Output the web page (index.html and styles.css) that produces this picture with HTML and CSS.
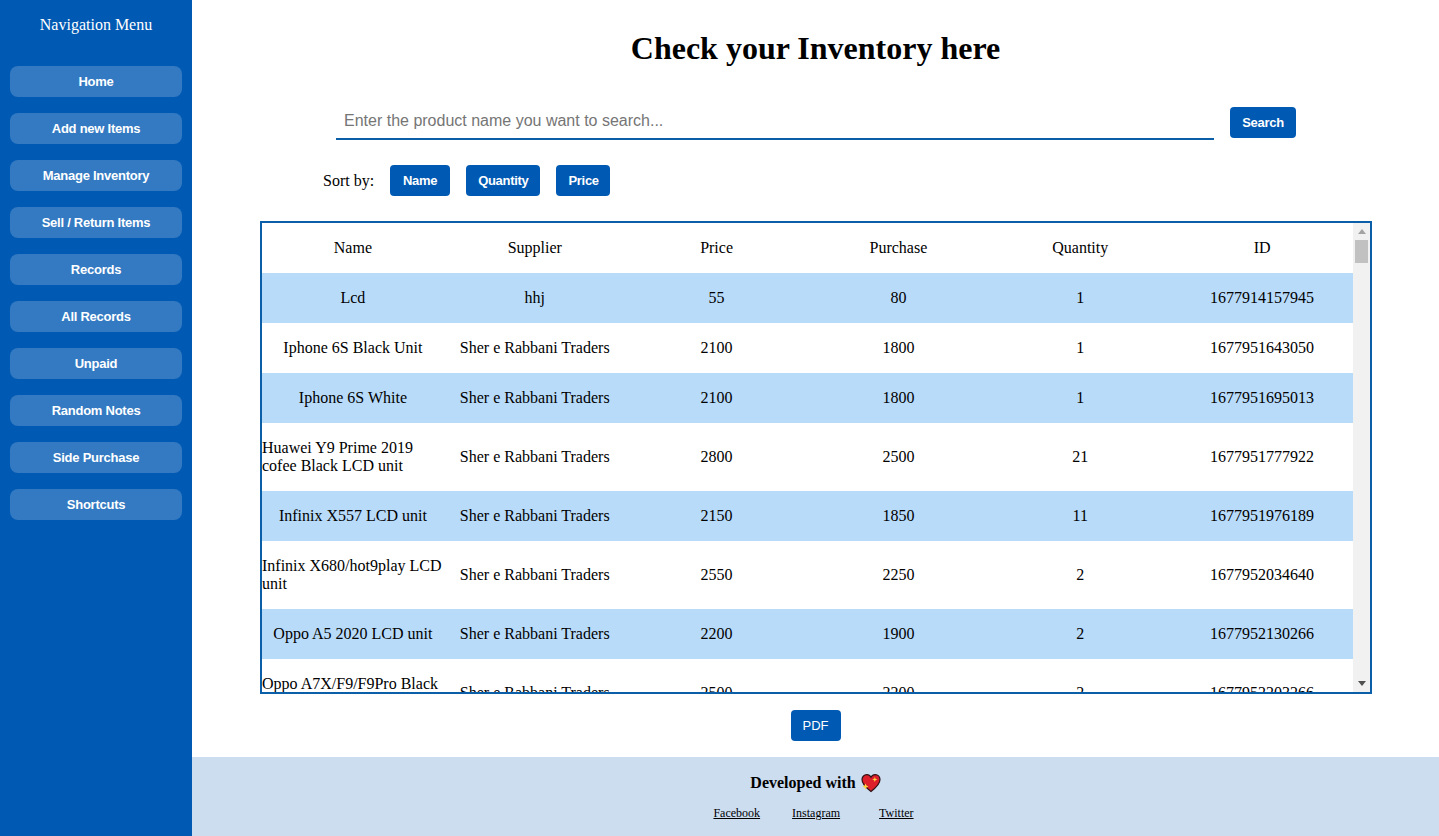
FILE: index.html
```html
<!DOCTYPE html>
<html>
<head>
  <title>Check your Inventory here</title>
  <link rel="stylesheet" href="styles.css">
</head>
<body>
  <nav class="sidebar">
    <h3 class="sidebar-title">Navigation Menu</h3>
    <a class="nav-btn">Home</a>
    <a class="nav-btn">Add new Items</a>
    <a class="nav-btn">Manage Inventory</a>
    <a class="nav-btn">Sell / Return Items</a>
    <a class="nav-btn">Records</a>
    <a class="nav-btn">All Records</a>
    <a class="nav-btn">Unpaid</a>
    <a class="nav-btn">Random Notes</a>
    <a class="nav-btn">Side Purchase</a>
    <a class="nav-btn">Shortcuts</a>
  </nav>

  <div class="page">
    <main class="content">
      <h1 class="title">Check your Inventory here</h1>

      <div class="search-row">
        <input class="search-input" type="text" placeholder="Enter the product name you want to search...">
        <button class="btn btn-search">Search</button>
      </div>

      <div class="sort-row">
        <span class="sort-label">Sort by:</span>
        <button class="btn btn-name">Name</button>
        <button class="btn">Quantity</button>
        <button class="btn btn-price">Price</button>
      </div>

      <div class="inventory">
        <div class="inv-list">
          <div class="inv-row">
            <div>Name</div><div>Supplier</div><div>Price</div><div>Purchase</div><div>Quantity</div><div>ID</div>
          </div>
          <div class="inv-row">
            <div>Lcd</div><div>hhj</div><div>55</div><div>80</div><div>1</div><div>1677914157945</div>
          </div>
          <div class="inv-row">
            <div>Iphone 6S Black Unit</div><div>Sher e Rabbani Traders</div><div>2100</div><div>1800</div><div>1</div><div>1677951643050</div>
          </div>
          <div class="inv-row">
            <div>Iphone 6S White</div><div>Sher e Rabbani Traders</div><div>2100</div><div>1800</div><div>1</div><div>1677951695013</div>
          </div>
          <div class="inv-row">
            <div>Huawei Y9 Prime 2019 cofee Black LCD unit</div><div>Sher e Rabbani Traders</div><div>2800</div><div>2500</div><div>21</div><div>1677951777922</div>
          </div>
          <div class="inv-row">
            <div>Infinix X557 LCD unit</div><div>Sher e Rabbani Traders</div><div>2150</div><div>1850</div><div>11</div><div>1677951976189</div>
          </div>
          <div class="inv-row">
            <div>Infinix X680/hot9play LCD unit</div><div>Sher e Rabbani Traders</div><div>2550</div><div>2250</div><div>2</div><div>1677952034640</div>
          </div>
          <div class="inv-row">
            <div>Oppo A5 2020 LCD unit</div><div>Sher e Rabbani Traders</div><div>2200</div><div>1900</div><div>2</div><div>1677952130266</div>
          </div>
          <div class="inv-row">
            <div>Oppo A7X/F9/F9Pro Black LCD unit</div><div>Sher e Rabbani Traders</div><div>2500</div><div>2200</div><div>2</div><div>1677952203266</div>
          </div>
        </div>
        <div class="scroll-track">
          <span class="scroll-arrow"><i class="arrow-up"></i></span>
          <span class="scroll-thumb"></span>
          <span class="scroll-arrow scroll-arrow-end"><i class="arrow-down"></i></span>
        </div>
      </div>

      <button class="btn btn-pdf">PDF</button>
    </main>

    <footer class="footer">
      <div class="footer-line">
        <span>Developed with</span>
        <svg class="heart" viewBox="0 0 20 20" width="20" height="20">
          <path d="M10 18.5 C6 15.5 1 11.5 1 6.6 C1 3.6 3.4 1.6 5.8 1.6 C7.6 1.6 9.2 2.6 10 4.2 C10.8 2.6 12.4 1.6 14.2 1.6 C16.7 1.6 19 3.6 19 6.6 C19 11.5 14 15.5 10 18.5 Z" fill="#dc1f2a" stroke="#2e1417" stroke-width="1.2"/>
          <path d="M13.8 4 L14.5 5.8 L16.3 6.5 L14.5 7.2 L13.8 9 L13.1 7.2 L11.3 6.5 L13.1 5.8 Z" fill="#ffd23f"/>
          <path d="M4.5 10.5 L5.4 12.6 L7.5 13.5 L5.4 14.4 L4.5 16.5 L3.6 14.4 L1.5 13.5 L3.6 12.6 Z" fill="#ffd23f"/>
        </svg>
      </div>
      <div class="footer-links">
        <a href="#">Facebook</a>
        <a href="#">Instagram</a>
        <a href="#">Twitter</a>
      </div>
    </footer>
  </div>
</body>
</html>
```

FILE: styles.css
```css
* {
  box-sizing: border-box;
}
html, body {
  height: 100%;
}
body {
  margin: 0;
  display: flex;
  overflow: hidden;
  font-family: "Liberation Serif", serif;
  color: #000;
  background-color: #fff;
}

/* sidebar */
.sidebar {
  width: 192px;
  flex: none;
  background-color: #0059b3;
  padding: 16px 10px 0;
  display: flex;
  flex-direction: column;
  gap: 16px;
}
.sidebar-title {
  margin: 0 0 16px;
  height: 18px;
  color: #fff;
  font-size: 16px;
  font-weight: normal;
  line-height: 18px;
  text-align: center;
}
.nav-btn {
  height: 31px;
  line-height: 31px;
  background-color: rgba(255, 255, 255, 0.2);
  border-radius: 8px;
  color: #fff;
  font-family: "Liberation Sans", sans-serif;
  font-size: 13px;
  font-weight: bold;
  letter-spacing: -0.25px;
  text-align: center;
}

/* main */
.page {
  flex: 1;
  min-width: 0;
  display: flex;
  flex-direction: column;
}
.content {
  flex: 1;
  display: flex;
  flex-direction: column;
  align-items: center;
  padding-top: 30px;
}
.title {
  margin: 0;
  font-size: 32px;
  line-height: 37px;
  text-align: center;
}
.btn {
  height: 31px;
  padding: 0 12px;
  border: none;
  border-radius: 4px;
  background-color: #0059b3;
  color: #fff;
  font-family: "Liberation Sans", sans-serif;
  font-size: 13px;
  font-weight: bold;
  letter-spacing: -0.3px;
}
.search-row {
  align-self: flex-start;
  display: flex;
  align-items: flex-end;
  gap: 16px;
  margin: 35px 0 0 144px;
}
.search-input {
  width: 878px;
  height: 38px;
  padding: 2px 8px 0;
  border: none;
  border-bottom: 2px solid #0b5ea8;
  outline: none;
  font-family: "Liberation Sans", sans-serif;
  font-size: 16px;
}
.btn-search {
  width: 66px;
  margin-bottom: 2px;
}
.sort-row {
  align-self: flex-start;
  display: flex;
  align-items: center;
  gap: 16px;
  margin: 25px 0 0 131px;
}
.sort-label {
  font-size: 16px;
}
.btn-name {
  width: 60px;
}
.btn-price {
  width: 54px;
}
.inventory {
  align-self: flex-start;
  width: 1112px;
  height: 473px;
  margin: 25px 0 0 68px;
  border: 2px solid #0b5ea8;
  display: flex;
  font-size: 16px;
}
.inv-list {
  flex: 1;
  min-width: 0;
  overflow: hidden;
}
.inv-row {
  display: grid;
  grid-template-columns: repeat(6, 1fr);
  line-height: 18px;
}
.inv-row:nth-child(even) {
  background-color: #b8dbfa;
}
.inv-row > div {
  display: flex;
  align-items: center;
  justify-content: center;
  padding: 16px 0;
  min-width: 0;
}

/* scrollbar, the list sits at the top of a long list */
.scroll-track {
  width: 17px;
  flex: none;
  display: flex;
  flex-direction: column;
  background-color: #f1f1f1;
}
.scroll-arrow {
  height: 17px;
  display: flex;
  align-items: center;
  justify-content: center;
}
.scroll-arrow-end {
  margin-top: auto;
}
.arrow-up {
  border: 4.5px solid transparent;
  border-top: none;
  border-bottom: 5px solid #a3a3a3;
}
.arrow-down {
  border: 4.5px solid transparent;
  border-bottom: none;
  border-top: 5px solid #505050;
}
.scroll-thumb {
  height: 23px;
  margin: 0 2px;
  background-color: #c1c1c1;
}

.btn-pdf {
  width: 50px;
  padding: 0;
  margin-top: 16px;
  font-weight: normal;
  letter-spacing: 0;
}

/* footer */
.footer {
  height: 79px;
  flex: none;
  background-color: #ccddf0;
  display: flex;
  flex-direction: column;
  align-items: center;
  padding-top: 16px;
}
.footer-line {
  display: flex;
  align-items: center;
  gap: 5px;
  height: 20px;
  font-size: 16px;
  font-weight: bold;
}
.footer-links {
  display: flex;
  gap: 32px;
  margin: 13px 4px 0 0;
  font-size: 12px;
}
.footer-links a {
  color: #000;
}
.footer-links a:last-child {
  margin-left: 7px;
}
```
